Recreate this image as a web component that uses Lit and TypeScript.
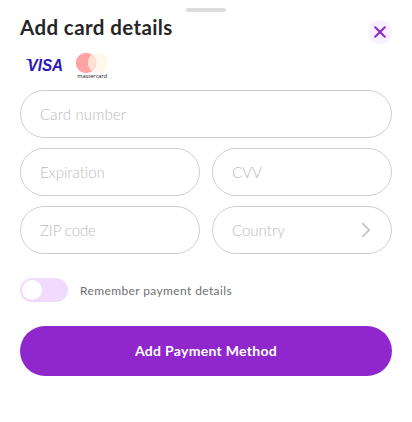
import { LitElement, html, css } from "lit";
import { customElement, property, state } from "lit/decorators.js";

@customElement("card-brands")
class CardBrands extends LitElement {
  static styles = css`
    :host { display: block; height: 30px; }
    svg { display: block; }
    .visa { font: italic 700 16.5px "Liberation Sans", sans-serif; fill: #2c16bc; }
    .mc { font: 400 5px "Open Sans", sans-serif; fill: #111; }
  `;
  render() {
    return html`<svg width="100" height="30" viewBox="0 0 100 30" role="img" aria-label="Visa, mastercard">
      <path d="M6 7h4.200l2.400 5-2.100-2.200C9.300 8.500 7.800 7.700 6 7.400z" fill="#2c16bc" />
      <text class="visa" x="7.600" y="19" textLength="35.500" lengthAdjust="spacingAndGlyphs">VISA</text>
      <circle cx="78" cy="11" r="10.200" fill="#fff9ed" />
      <circle cx="66" cy="11" r="10.200" fill="#ffa3a3" />
      <path d="M72 2.750a10.200 10.200 0 0 1 0 16.500a10.200 10.200 0 0 1 0-16.500z" fill="#ffdfd4" />
      <text class="mc" x="57.200" y="26" textLength="30" lengthAdjust="spacingAndGlyphs">mastercard</text>
    </svg>`;
  }
}

@customElement("card-field")
class CardField extends LitElement {
  @property() label = "";
  @property() spacing = "0";
  @property({ type: Boolean }) picker = false;
  static styles = css`
    :host { display: block; min-width: 0; }
    .field {
      box-sizing: border-box; height: 48px; width: 100%;
      border: 1px solid #cfcfcf; border-radius: 24px;
      display: flex; align-items: center; padding: 0 20px 0 19px;
      background: #fff;
    }
    input {
      flex: 1; min-width: 0; height: 24px; border: 0; padding: 0; outline: none; background: none;
      font: 300 15px/24px Lato, sans-serif; color: #262626; font-variant-ligatures: none;
    }
    input::placeholder { color: #bcbcbc; opacity: 1; }
    svg { flex: none; }
  `;
  render() {
    return html`<div class="field">
      <input placeholder=${this.label} aria-label=${this.label} ?readonly=${this.picker}
        style="letter-spacing:${this.spacing}px" />
      ${this.picker
        ? html`<svg width="10" height="16" viewBox="0 0 10 16" fill="none" stroke="#c8c8c8" stroke-width="1.900"
            stroke-linecap="round" stroke-linejoin="round"><path d="M1.800 1.600L8.200 8L1.800 14.400" /></svg>`
        : null}
    </div>`;
  }
}

@customElement("app-root")
class AppRoot extends LitElement {
  @state() remember = false;
  static styles = css`
    :host {
      display: block; box-sizing: border-box; height: 422px; padding: 8px 20px 0;
      background: #fff; font-family: Lato, sans-serif;
    }
    .handle { width: 40px; height: 4px; border-radius: 2px; background: #dcdcdc; margin: 0 auto; }
    .head { display: flex; justify-content: space-between; height: 32px; margin-top: 3px; }
    h1 { margin: 0; font-size: 20.5px; line-height: 24px; font-weight: 700; color: #262626; letter-spacing: 0.4px; }
    .close {
      width: 24px; height: 24px; margin-top: 5px; padding: 0; border: 0; border-radius: 50%;
      background: #f9f0ff; display: grid; place-items: center;
    }
    card-brands { margin-top: 5px; }
    .fields { display: grid; grid-template-columns: 1fr 1fr; gap: 10px 12px; margin-top: 8px; }
    .wide { grid-column: 1 / -1; }
    .remember { display: flex; align-items: center; gap: 12px; margin-top: 24px; height: 24px; }
    .switch {
      width: 48px; height: 24px; padding: 2px; box-sizing: border-box; border: 0; border-radius: 12px;
      background: #f0dbff; display: flex;
    }
    .switch.on { background: #8f27cc; justify-content: flex-end; }
    .knob { width: 20px; height: 20px; border-radius: 50%; background: #fff; }
    .note { font-size: 12px; line-height: 24px; color: #707070; letter-spacing: 0.38px; padding-top: 1px; white-space: nowrap; }
    .submit {
      display: block; width: 100%; height: 50px; margin-top: 24px; padding: 0; border: 0; border-radius: 25px;
      background: #8f27cc; color: #fff; font: 700 14px/50px Lato, sans-serif; letter-spacing: 0.3px;
    }
  `;
  render() {
    return html`
      <div class="handle"></div>
      <div class="head">
        <h1>Add card details</h1>
        <button class="close" aria-label="Close">
          <svg width="12" height="12" viewBox="0 0 12 12" stroke="#8f27cc" stroke-width="2" stroke-linecap="round">
            <path d="M1.200 1.200L10.800 10.800M10.800 1.200L1.200 10.800" />
          </svg>
        </button>
      </div>
      <card-brands></card-brands>
      <div class="fields">
        <card-field class="wide" label="Card number" spacing="0.15"></card-field>
        <card-field label="Expiration"></card-field>
        <card-field label="CVV"></card-field>
        <card-field label="ZIP code" spacing="-0.1"></card-field>
        <card-field label="Country" picker></card-field>
      </div>
      <div class="remember">
        <button class="switch ${this.remember ? "on" : ""}" role="switch" aria-checked=${this.remember}
          aria-label="Remember payment details" @click=${() => (this.remember = !this.remember)}>
          <span class="knob"></span>
        </button>
        <span class="note">Remember payment details</span>
      </div>
      <button class="submit">Add Payment Method</button>
    `;
  }
}
